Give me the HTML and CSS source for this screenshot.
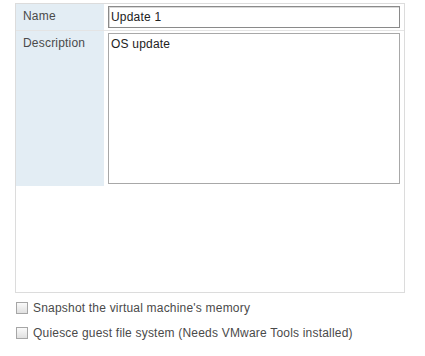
FILE: index.html
```html
<!DOCTYPE html>
<html lang="en">
<head>
    <meta charset="UTF-8">
    <title>Take Snapshot</title>
    <link rel="stylesheet" href="styles.css">
</head>
<body>
    <div class="panel">
        <div class="row name-row">
            <label class="label" for="name">Name</label>
            <div class="field">
                <input type="text" id="name" class="text-input" value="Update 1">
            </div>
        </div>
        <div class="row desc-row">
            <label class="label" for="description">Description</label>
            <div class="field">
                <textarea id="description" class="text-area">OS update</textarea>
            </div>
        </div>
    </div>
    <div class="options">
        <label class="option"><input type="checkbox" class="check"> Snapshot the virtual machine's memory</label>
        <label class="option"><input type="checkbox" class="check"> Quiesce guest file system (Needs VMware Tools installed)</label>
    </div>
</body>
</html>
```

FILE: styles.css
```css
body {
    margin: 0;
    padding: 3px 0 0 15px;
    font-family: "Liberation Sans", Arial, sans-serif;
    font-size: 12px;
    letter-spacing: 0.2px;
    color: #333;
    background-color: white;
}
.panel {
    width: 388px;
    height: 288px;
    border: 1px solid #dcdcdc;
}
.row {
    display: flex;
}
.label {
    width: 81px;
    padding-left: 7px;
    background-color: #e3edf4;
    color: #4a4a4a;
}
.name-row {
    height: 26px;
    border-bottom: 1px solid #e4e4e4;
}
.name-row .label {
    line-height: 24px;
}
.desc-row .label {
    padding-top: 5px;
    height: 150px;
}
.field {
    padding: 2px 4px 0 4px;
}
.text-input {
    box-sizing: border-box;
    width: 292px;
    height: 22px;
    margin: 0;
    padding: 0 2px;
    border: 1px solid #8a8a8a;
    box-shadow: inset 1px 1px 0 #d8d8d8;
    font-family: inherit;
    font-size: 12px;
    letter-spacing: inherit;
    color: #222;
    outline: none;
}
.text-area {
    box-sizing: border-box;
    display: block;
    width: 292px;
    height: 151px;
    margin: 0;
    padding: 3px 2px;
    border: 1px solid #a8a8a8;
    font-family: inherit;
    font-size: 12px;
    letter-spacing: inherit;
    color: #222;
    resize: none;
    outline: none;
}
.options {
    padding-top: 8px;
    display: flex;
    flex-direction: column;
    gap: 11px;
}
.option {
    display: flex;
    align-items: center;
    gap: 5px;
    height: 14px;
    color: #4a4a4a;
}
.check {
    appearance: none;
    margin: 0 0 0 1px;
    width: 12px;
    height: 12px;
    border: 1px solid #a6a6a6;
    background: linear-gradient(#fafafa, #e0e0e0);
    box-sizing: border-box;
}
```
